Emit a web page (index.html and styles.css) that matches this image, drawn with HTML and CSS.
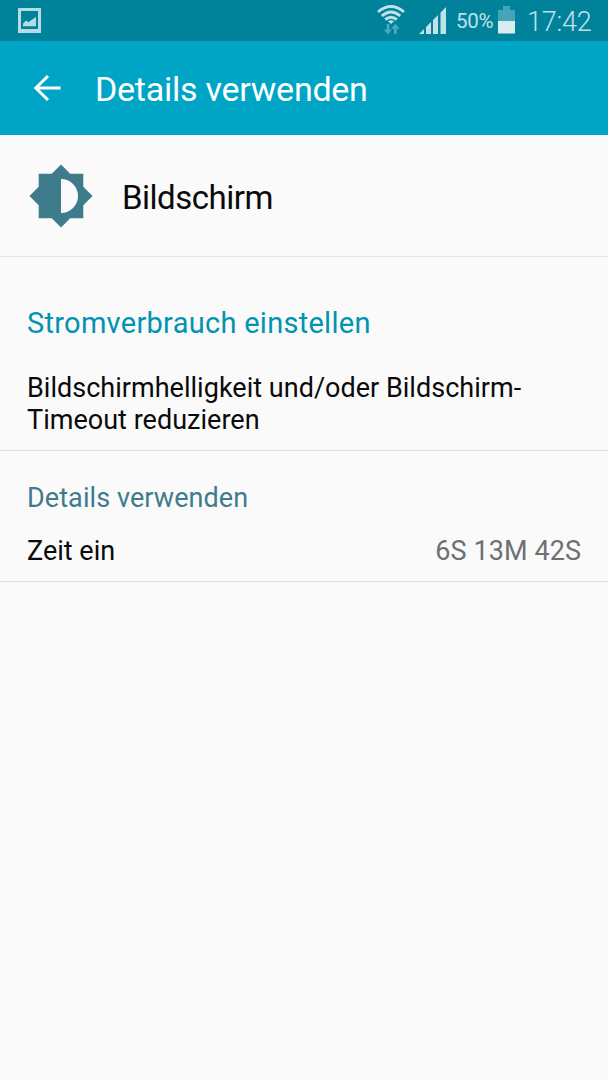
FILE: index.html
```html
<!DOCTYPE html>
<html lang="de">
<head>
<meta charset="utf-8">
<title>Details verwenden</title>
<link rel="stylesheet" href="styles.css">
</head>
<body>
<div class="status">
  <svg class="shot" width="24" height="25" viewBox="0 0 24 25"><path fill="#b5dce5" fill-rule="evenodd" d="M0 0h23v25H0zM3 3v18h17V3z"/><path fill="#b5dce5" d="M5 18.300v-2.500l3-3.300 2.500 1.700 3-2.200 4.500-3v9.300z"/></svg>
  <div class="tray">
    <svg class="wifi" width="28" height="32" viewBox="0 0 28 32"><g fill="none" stroke="#c0e1e8" stroke-width="2.900"><path d="M1 8Q14-2.800 27 8"/><path d="M4.800 11.800Q14 4 23.200 11.800"/><path d="M8.200 15.500Q14 10.800 19.800 15.500"/></g><path fill="#c0e1e8" d="M11 17.300q3-2.200 6 0L14 20z"/><path fill="#4aabbd" d="M9.700 20h2.600v5.500h2.500L11 30.500l-4.200-5h2.900zM17 30h2.700v-5.300h2.900L18.300 19.500l-4 5.200H17z"/></svg>
    <svg class="signal" width="28" height="28" viewBox="0 0 28 28"><path fill="#c0e1e8" d="M0 27l5-5v5zM7 27v-7l5-5v12zM14 27V13l5-5v19zM21.500 27V5.500L27 0v27z"/></svg>
    <span class="percent">50%</span>
    <svg class="battery" width="17" height="28" viewBox="0 0 17 28"><path fill="#45a5b8" d="M0 4h5V0h7v4h5v12H0z"/><path fill="#d8edf1" d="M0 15h17v12.500H0z"/></svg>
    <span class="clock">17:42</span>
  </div>
</div>
<header class="bar">
  <svg class="back" width="28" height="28" viewBox="0 0 28 28"><path fill="none" stroke="#fff" stroke-width="3" d="M27.500 14H3M15 2L2.800 14 15 26"/></svg>
  <h1 class="title">Details verwenden</h1>
</header>
<main>
  <section class="item">
    <svg class="bright" width="64" height="64" viewBox="0 0 64 64"><path fill="#3e7c8c" fill-rule="evenodd" d="M32 .500L41.200 9.700H54.300V22.800L63.500 32l-9.200 9.200v13.100H41.200L32 63.500l-9.200-9.200H9.700V41.200L.500 32l9.200-9.200V9.700h13.100zM32 15v34a17 17 0 0 0 0-34z"/></svg>
    <span class="name">Bildschirm</span>
  </section>
  <section class="adjust">
    <h2 class="link">Stromverbrauch einstellen</h2>
    <p class="hint">Bildschirmhelligkeit und/oder Bildschirm-<br>Timeout reduzieren</p>
  </section>
  <section class="usage">
    <h2 class="subhead">Details verwenden</h2>
    <div class="row"><span class="label">Zeit ein</span><span class="value">6S 13M 42S</span></div>
  </section>
</main>
</body>
</html>
```
FILE: styles.css
```css
* { box-sizing: border-box; }
body { margin: 0; height: 1080px; background: #fafafa; color: #0a0a0a; font-family: Roboto, sans-serif; overflow: hidden; }
h1, h2, p { margin: 0; font-weight: 400; }
svg { display: block; flex: none; }
span, h1, h2 { white-space: nowrap; }
.status { height: 41px; background: #00829b; display: flex; justify-content: space-between; padding: 0 16px 0 18px; }
.shot { margin-top: 8px; }
.tray { display: flex; color: #c0e1e8; }
.wifi { margin: 4px 14px 0 0; }
.signal { margin: 7px 9px 0 0; }
.percent { font-size: 20.5px; line-height: 42px; width: 42px; letter-spacing: -0.3px; }
.battery { margin-top: 6px; }
.clock { font-size: 27px; line-height: 44px; font-weight: 300; margin-left: 12px; width: 65px; letter-spacing: -0.2px; }
.bar { height: 94px; background: #00a5c6; display: flex; align-items: center; padding-left: 33px; }
.back { margin-bottom: 1px; }
.title { color: #fff; font-size: 34px; line-height: 40px; margin: 2px 0 0 34px; letter-spacing: -0.25px; }
.item { height: 122px; border-bottom: 1px solid #e3e3e3; display: flex; align-items: center; padding-left: 29px; }
.name { font-size: 33px; line-height: 40px; margin: 4px 0 0 29px; letter-spacing: -0.5px; }
.adjust { height: 194px; border-bottom: 1px solid #dedede; padding: 48px 27px 0; }
.link { color: #0093b2; font-size: 29px; line-height: 36px; letter-spacing: 0.28px; }
.hint { font-size: 27px; line-height: 32px; margin-top: 31px; letter-spacing: 0.02px; }
.usage { height: 131px; border-bottom: 1px solid #dedede; padding: 31px 27px 0; }
.subhead { color: #3e7c8c; font-size: 27px; line-height: 32px; letter-spacing: 0.08px; }
.row { display: flex; justify-content: space-between; font-size: 27px; line-height: 32px; margin-top: 21px; }
.value { color: #6e7072; letter-spacing: 0.08px; }
```
